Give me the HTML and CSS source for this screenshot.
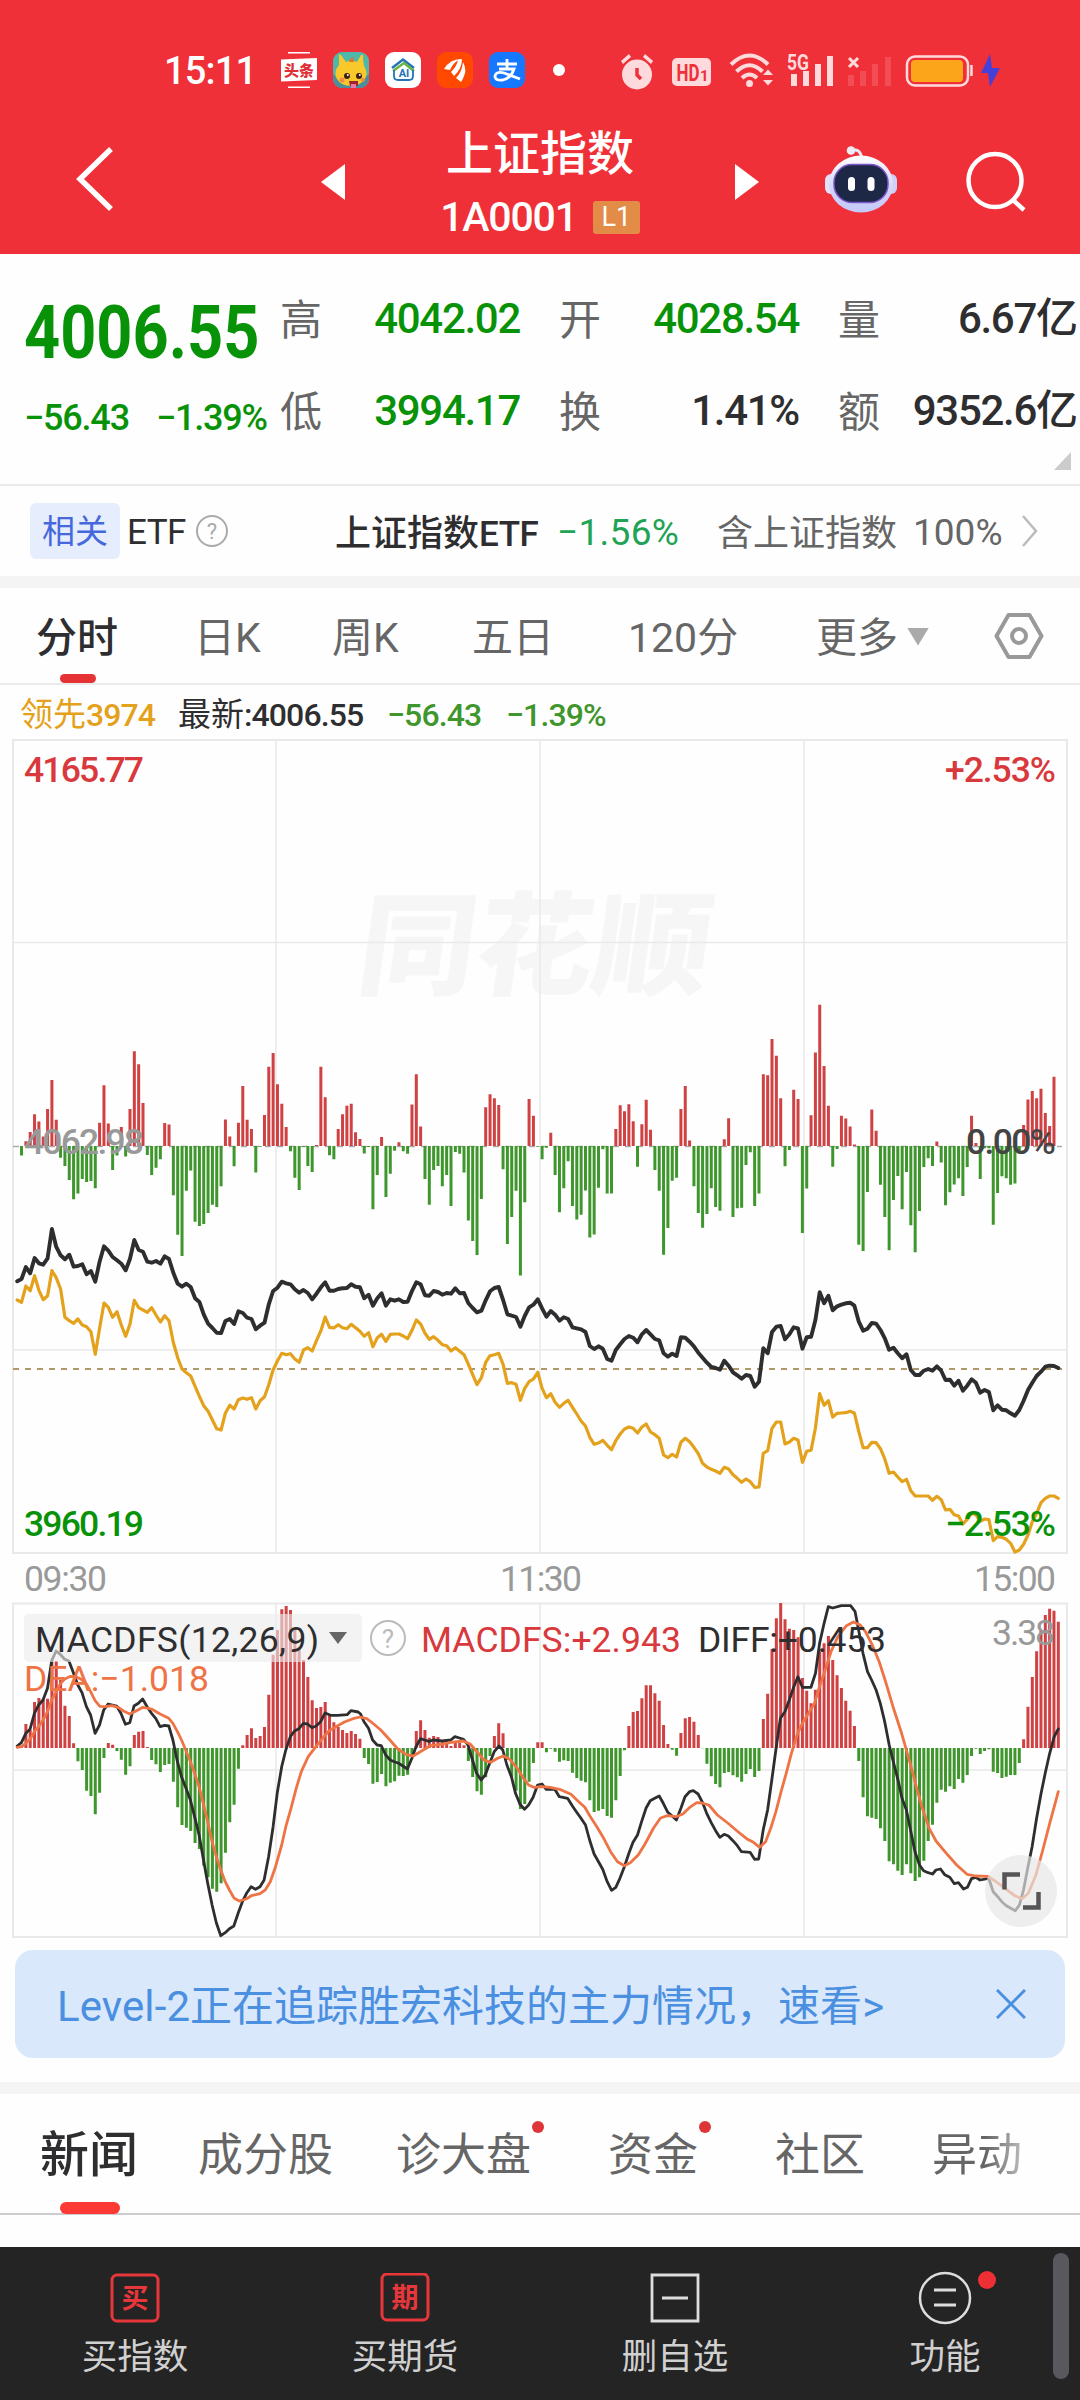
FILE: index.html
```html
<!DOCTYPE html>
<html lang="zh-CN">
<head>
<meta charset="utf-8">
<title>上证指数 1A0001</title>
<link rel="stylesheet" href="styles.css">
</head>
<body>
<header class="header">
  <div class="status">
    <span class="clock">15:11</span>
    <div class="apps">
      <svg class="app" viewBox="0 0 36 36"><path d="M7 .8h22M7 35.2h22" stroke="#fff" stroke-width="1.6"/><path d="M0 7.500 36 6v22L0 29.500z" fill="#fff"/><text x="18" y="23.500" text-anchor="middle" class="tt">头条</text></svg>
      <svg class="app" viewBox="0 0 36 36"><rect width="36" height="36" rx="9" fill="#4fb8a8"/><path d="M0 22Q18 40 36 22V27a9 9 0 0 1-9 9H9a9 9 0 0 1-9-9z" fill="#4a8f9c"/><path d="M6 4Q5 1 8 3L13 10 18 8 24 10 28 3Q31 2 30 7L31 14Q36 22 31 28 26 34 18 34 8 34 4 27 0 20 6 13z" fill="#f9c92c"/><path d="M17 7l3-2 1 5h-5z" fill="#e2752a"/><circle cx="14" cy="24" r="3" fill="#3b2015"/><circle cx="26" cy="24" r="3" fill="#3b2015"/><circle cx="14.800" cy="23" r="1" fill="#fff"/><circle cx="26.800" cy="23" r="1" fill="#fff"/><circle cx="9" cy="28" r="2.500" fill="#f08a4b"/><circle cx="30" cy="28" r="2" fill="#f08a4b"/><path d="M16 29h9v5h-8z" fill="#a02430"/><path d="M18 32h5v4h-5z" fill="#e77ba8"/></svg>
      <svg class="app" viewBox="0 0 36 36"><rect width="36" height="36" rx="9" fill="#fff"/><path d="M7 16 18 7.500 29 16" fill="none" stroke="#2474b8" stroke-width="2.500"/><path d="M8 19 19 11l10 8" fill="none" stroke="#6ab344" stroke-width="2.500"/><path d="M9 18v6q0 4 4 4h11q4 0 4-4v-6" fill="none" stroke="#2474b8" stroke-width="1.800"/><text x="19" y="24.500" text-anchor="middle" class="ai">AI</text></svg>
      <svg class="app" viewBox="0 0 36 36"><rect width="36" height="36" rx="9" fill="#ff4800"/><path d="M7 17Q13 7 24 7 16 10 13 18zM14 20Q20 14 21 8l4-1Q25 17 17 24zM19 26q6-6 7-16 4 8 1 14-2 5-3 6z" fill="#fff"/></svg>
      <svg class="app" viewBox="0 0 36 36"><rect width="36" height="36" rx="9" fill="#1677ff"/><path d="M8 12h20M18 7v10M10 17h15q-3 9-11 11-8 1-8-4 1-5 9-3 8 3 16 6" fill="none" stroke="#fff" stroke-width="2.800"/></svg>
    </div>
    <i class="more-dot"></i>
    <svg class="sys" viewBox="615 48 395 44">
      <g fill="#ffdadc">
        <circle cx="637" cy="74.500" r="15"/>
        <path d="M621 61l8-7 2 3-8 7zM653 61l-8-7-2 3 8 7z"/>
        <path d="M637 68v7l4 4" fill="none" stroke="#f03038" stroke-width="3.500"/>
        <rect x="672" y="58" width="39" height="28" rx="5"/>
        <circle cx="749.500" cy="83.500" r="3.500"/>
        <path d="M765 74l5-5.500 5 5.500zM765 79l5 5.500 5-5.500z" transform="translate(-2 1)"/>
        <path d="M791 74h6v12h-6zM803 71h6v15h-6zM815 64h6v22h-6zM827 56h6v30h-6z"/>
      </g>
      <g fill="none" stroke="#ffdadc" stroke-width="4">
        <path d="M731 64.500q18.500-18 37 0M736.500 71.500q13-12.500 26 0M742 78q7.500-7 15 0"/>
        <path d="M849 58l9 9M858 58l-9 9" stroke-width="3"/>
      </g>
      <path d="M848 75h6v11h-6zM860 71h6v15h-6zM872 64h6v22h-6zM885 57h6v29h-6z" fill="#fff" opacity=".14"/>
      <text class="hd" x="676.500" y="81" textLength="23" lengthAdjust="spacingAndGlyphs">HD</text><text class="hd1" x="700" y="81">1</text>
      <text class="g5" x="787" y="70" textLength="22" lengthAdjust="spacingAndGlyphs">5G</text>
      <rect x="907" y="56.500" width="61" height="29" rx="8" fill="none" stroke="#ffdadc" stroke-width="2.500"/>
      <rect x="911" y="60" width="52" height="22" rx="4" fill="#fca41a"/>
      <path d="M971.500 65v11" stroke="#ffdadc" stroke-width="2.500"/>
      <path d="M990 54 981 73h7l2 14 10-19h-8z" fill="#4540d8"/>
    </svg>
  </div>
  <div class="nav">
    <svg class="back" viewBox="0 0 40 66"><path d="M36 3 5 33 36 63" fill="none" stroke="#fff" stroke-width="5.500"/></svg>
    <svg class="tri" viewBox="0 0 24 36"><path d="M24 0v36L0 18z" fill="#fff"/></svg>
    <div class="title">
      <h1>上证指数</h1>
      <div class="code"><span>1A0001</span><b>L1</b></div>
    </div>
    <svg class="tri" viewBox="0 0 24 36"><path d="M0 0v36l24-18z" fill="#fff"/></svg>
    <svg class="robot" viewBox="825 145 72 68">
      <defs><linearGradient id="shell" x1="0" y1="0" x2="0" y2="1"><stop offset="0" stop-color="#fff"/><stop offset=".55" stop-color="#d5d5fa"/><stop offset="1" stop-color="#c3c9fb"/></linearGradient></defs>
      <path d="M851 151q9-4 11 8" fill="none" stroke="#e8e6f4" stroke-width="3"/>
      <circle cx="851" cy="150.500" r="4.300" fill="#eceaf5"/>
      <rect x="825" y="174" width="14" height="20" rx="6" fill="#e4e2fb"/><rect x="883" y="174" width="14" height="20" rx="6" fill="#d0cffa"/>
      <ellipse cx="861" cy="184" rx="32" ry="28.500" fill="url(#shell)"/>
      <rect x="834" y="164.500" width="54" height="38" rx="18" fill="#1d2846" stroke="#7a55c8" stroke-width="1.500"/>
      <rect x="848" y="177" width="7" height="14" rx="3.500" fill="#fff"/><rect x="867.500" y="177" width="7" height="14" rx="3.500" fill="#fff"/>
    </svg>
    <svg class="search" viewBox="0 0 62 62"><circle cx="29" cy="30.500" r="26.500" fill="none" stroke="#fff" stroke-width="4.500"/><path d="M47 50 58 60" stroke="#fff" stroke-width="4.500"/></svg>
  </div>
</header>

<section class="quote">
  <div class="now">
    <strong>4006.55</strong>
    <div class="chg"><span>−56.43</span><span>−1.39%</span></div>
  </div>
  <dl class="stats">
    <dt>高</dt><dd class="g">4042.02</dd><dt>开</dt><dd class="g">4028.54</dd><dt>量</dt><dd>6.67<em>亿</em></dd>
    <dt>低</dt><dd class="g">3994.17</dd><dt>换</dt><dd>1.41%</dd><dt>额</dt><dd>9352.6<em>亿</em></dd>
  </dl>
  <i class="corner"></i>
</section>

<section class="etf">
  <span class="tag">相关</span>
  <span class="etf-label">ETF</span>
  <svg class="help" viewBox="0 0 34 34"><circle cx="17" cy="17" r="15" fill="none" stroke="#aaa" stroke-width="2"/><text x="17" y="25" text-anchor="middle" class="q">?</text></svg>
  <span class="etf-name">上证指数<i>ETF</i></span>
  <span class="etf-chg">−1.56%</span>
  <span class="etf-in">含上证指数</span>
  <span class="etf-pct">100%</span>
  <svg class="go" viewBox="0 0 18 32"><path d="M2 1 15 16 2 31" fill="none" stroke="#bbb" stroke-width="2.500"/></svg>
</section>

<nav class="periods">
  <a class="on">分时</a><a>日K</a><a>周K</a><a>五日</a><a class="m120">120分</a><a>更多<i></i></a>
  <svg class="hex" viewBox="0 0 50 48"><path d="M14.500 3h21L47.500 24l-12 21h-21L2.500 24z" fill="none" stroke="#999" stroke-width="4" stroke-linejoin="round"/><circle cx="25" cy="24" r="7" fill="none" stroke="#999" stroke-width="4"/></svg>
</nav>

<div class="legend">
  <span class="lead">领先<i>3974</i></span><span>最新<i>:4006.55</i></span><span class="dn">−56.43</span><span class="dn">−1.39%</span>
</div>

<svg class="chart" viewBox="0 735 1080 1205">
  <g class="mark" transform="translate(354 986) skewX(-8)"><text textLength="352" lengthAdjust="spacingAndGlyphs">同花顺</text></g>
  <g class="grid">
    <rect x="13" y="740" width="1054" height="813"/>
    <path d="M13 942.500H1067M13 1350H1067M276 740V1553M540 740V1553M804 740V1553"/>
    <rect x="13" y="1603.500" width="1054" height="333.500"/>
    <path d="M13 1770H1067M276 1603V1937M540 1603V1937M804 1603V1937"/>
  </g>
  <path d="M13 1146.500H1062" stroke="#aaa" stroke-width="1.500" stroke-dasharray="6 6"/>
  <path d="M13 1369H1062" stroke="#b0986a" stroke-width="2" stroke-dasharray="6 6"/>
  <path id="flow-up" fill="#cf4142"/><path id="flow-down" fill="#3f962c"/>
  <polyline id="lead" class="line" stroke="#e3a11c" stroke-width="3.200"/>
  <polyline id="price" class="line" stroke="#2e2e30" stroke-width="3.900"/>
  <path id="macd-up" fill="#cf4142"/><path id="macd-down" fill="#3f962c"/>
  <polyline id="diff" class="line" stroke="#2e2e30" stroke-width="2.800"/>
  <polyline id="dea" class="line" stroke="#ee7446" stroke-width="2.800"/>
  <g class="num">
    <text x="24" y="782" textLength="120" fill="#d9393c">4165.77</text>
    <text x="945" y="782" textLength="111" fill="#d9393c">+2.53%</text>
    <text x="24" y="1154" textLength="120" fill="#999">4062.98</text>
    <text x="966" y="1154" textLength="90" fill="#444">0.00%</text>
    <text x="24" y="1536" textLength="120" fill="#089208">3960.19</text>
    <text x="945" y="1536" textLength="111" fill="#089208">−2.53%</text>
  </g>
  <g class="num mid" fill="#999">
    <text x="24" y="1591" textLength="83">09:30</text>
    <text x="500" y="1591" textLength="82">11:30</text>
    <text x="974" y="1591" textLength="82">15:00</text>
    <text x="992" y="1645" textLength="63">3.38</text>
  </g>
  <rect x="24" y="1614" width="338" height="48" rx="5" fill="#ececec" fill-opacity=".62"/>
  <g class="num mid">
    <text x="35" y="1651.500" textLength="284" fill="#2e2e30">MACDFS(12,26,9)</text>
    <path d="M329 1632h18l-9 12z" fill="#666"/>
    <circle cx="388" cy="1638" r="17" fill="none" stroke="#bbb" stroke-width="2"/>
    <text class="q2" x="388" y="1647.500" text-anchor="middle">?</text>
    <text x="421" y="1651.500" textLength="260" fill="#d9393c">MACDFS:+2.943</text>
    <text x="698" y="1651.500" textLength="188" fill="#2e2e30">DIFF:+0.453</text>
    <text x="24" y="1691" textLength="185" fill="#ee7446">DEA:−1.018</text>
  </g>
  <circle cx="1021" cy="1891" r="36" fill="#e6e6e6" fill-opacity=".68"/>
  <path d="M1004.500 1889.500V1874.500H1020M1038.500 1892V1907.500H1023" fill="none" stroke="#555" stroke-width="4.500"/>
</svg>

<aside class="notice">
  <span><i>Level-2</i>正在追踪胜宏科技的主力情况，速看<i>&gt;</i></span>
  <svg viewBox="0 0 30 30"><path d="M1 1 29 29M29 1 1 29" stroke="#4b8fe0" stroke-width="3"/></svg>
</aside>

<nav class="topics">
  <a class="on">新闻</a><a>成分股</a><a class="dot">诊大盘</a><a class="dot">资金</a><a>社区</a><a class="fade">异动</a>
</nav>

<footer class="bar">
  <a><svg viewBox="0 0 50 50"><rect x="2" y="2" width="46" height="46" rx="5" fill="none" stroke="#e8373b" stroke-width="3"/><text x="25" y="35" text-anchor="middle" class="ic">买</text></svg>买指数</a>
  <a><svg viewBox="0 0 50 50"><rect x="2" y="1" width="46" height="46" rx="5" fill="none" stroke="#e8373b" stroke-width="3"/><text x="25" y="34" text-anchor="middle" class="ic">期</text></svg>买期货</a>
  <a><svg viewBox="0 0 50 50"><path d="M2 2h46v46H2zM12 25h26" fill="none" stroke="#ddd" stroke-width="2.800"/></svg>删自选</a>
  <a class="fn"><svg viewBox="0 0 54 54"><circle cx="27" cy="27" r="25" fill="none" stroke="#ddd" stroke-width="2.500"/><path d="M16 19h22M16 34h22" stroke="#ddd" stroke-width="2.800"/></svg>功能</a>
  <i class="scroll"></i>
</footer>
<script src="chart.js"></script>
</body>
</html>
```
FILE: styles.css
```css
* { box-sizing: border-box; }
body {
  margin: 0;
  width: 1080px;
  height: 2400px;
  overflow: hidden;
  background: #fefefe;
  color: #2e2e30;
  font-family: Roboto, "Noto Sans CJK SC", sans-serif;
  display: flex;
  flex-direction: column;
}
i, em { font-style: normal; }
svg { display: block; flex: none; }

.header { height: 254px; background: #f03038; color: #fff; }
.status { height: 92px; padding: 48px 0 0 164px; display: flex; align-items: center; }
.clock { width: 117px; font-size: 38px; font-weight: 500; letter-spacing: -.8px; padding-top: 2px; }
.apps { display: flex; gap: 16px; }
.app { width: 36px; height: 36px; }
.tt { font: 900 15px "Noto Sans CJK SC", sans-serif; fill: #e02f38; }
.ai { font: 700 11px Roboto, sans-serif; fill: #2474b8; }
.more-dot { width: 12px; height: 12px; border-radius: 50%; background: #fff; margin: 0 50px 0 28px; }
.sys { width: 395px; height: 44px; }
.hd { font: 700 23px Roboto, sans-serif; fill: #f03038; }
.hd1 { font: 700 15px Roboto, sans-serif; fill: #f03038; }
.g5 { font: 700 22px Roboto, sans-serif; fill: #ffdadc; }

.nav {
  height: 162px;
  display: grid;
  grid-template-columns: 246px 24px 390px 90px 141px 62px;
  padding: 32px 0 0 75px;
  justify-content: start;
  align-items: start;
}
.back { width: 40px; height: 66px; margin-top: 22px; }
.tri { width: 24px; height: 36px; margin-top: 40px; }
.title { text-align: center; }
h1 { margin: -4px 0 0; font: 500 47px/60px "Noto Sans CJK SC", sans-serif; }
.code { display: flex; justify-content: center; align-items: center; gap: 16px; margin-top: 15px; height: 44px; }
.code span { font-size: 41px; font-weight: 500; letter-spacing: -1.2px; }
.code b { width: 47px; height: 33px; background: #e28c48; border-radius: 3px; font: 400 27px/33px Roboto, sans-serif; }
.robot { width: 72px; height: 68px; margin-top: 21px; }
.search { width: 62px; height: 62px; margin-top: 26px; }

.quote { position: relative; height: 232px; display: flex; border-bottom: 2px solid #eaeaea; }
.now { width: 280px; padding: 44px 0 0 24px; color: #089208; }
.now strong { display: block; font-size: 74px; line-height: 70px; font-weight: 700; transform: scaleX(.852); transform-origin: left; white-space: nowrap; }
.chg { display: flex; gap: 27px; margin-top: 29px; font-size: 36px; line-height: 42px; font-weight: 500; letter-spacing: -1.200px; white-space: nowrap; }
.stats { margin: 37px 0 0; display: flex; flex-wrap: wrap; width: 799px; align-content: flex-start; }
.stats dt { width: 42px; height: 92px; font: 400 42px/54px "Noto Sans CJK SC", sans-serif; color: #666; margin-top: -1px; height: 93px; }
.stats dd { margin: 0 39px 0 0; width: 198px; height: 92px; font-size: 42px; line-height: 56px; font-weight: 500; text-align: right; letter-spacing: -1.300px; white-space: nowrap; }
.stats dd:nth-of-type(3n) { margin-right: 0; width: 198px; }
.stats em { letter-spacing: 0; }
.stats .g { color: #089208; }
.corner { position: absolute; right: 9px; bottom: 14px; width: 17px; height: 18px; background: #ccc; clip-path: polygon(100% 0, 100% 100%, 0 100%); }

.etf { height: 90px; display: grid; grid-template-columns: 97px 68px 140px 222px 160px 196px 108px 20px; padding-left: 30px; align-items: center; font-size: 35px; white-space: nowrap; }
.tag { width: 90px; height: 56px; border-radius: 6px; background: #e6edfc; color: #4668dd; font-size: 33px; line-height: 58px; text-align: center; }
.etf-label { letter-spacing: -.5px; padding-top: 3px; }
.help { width: 34px; height: 34px; }
.q { font: 22px Roboto, sans-serif; fill: #aaa; }
.etf-name { font-size: 36px; font-weight: 500; margin-top: -2px; }
.etf-name i { font-size: 35px; letter-spacing: -.5px; }
.etf-chg { color: #20a355; font-size: 37px; letter-spacing: .3px; padding-top: 2px; }
.etf-in { color: #666; font-size: 36px; margin-top: -2px; }
.etf-pct { color: #666; font-size: 37px; padding-top: 2px; }
.go { width: 18px; height: 32px; }

.periods { position: relative; border-top: 12px solid #f4f4f4; border-bottom: 2px solid #eaeaea; height: 109px; display: grid; grid-template-columns: 158px 138px 140px 156px 188px 178px 50px; padding-left: 36px; align-items: center; font-size: 41px; color: #666; white-space: nowrap; }
.periods a { line-height: 56px; padding-top: 4px; }
.periods .on { color: #2e2e30; font-weight: 500; }
.periods .on::after { content: ""; position: absolute; left: 60px; bottom: 0; width: 36px; height: 9px; border-radius: 5px; background: #e53235; }
.periods a i { display: inline-block; margin: 0 0 6px 9px; width: 22px; height: 18px; background: #aaa; clip-path: polygon(0 0, 100% 0, 50% 100%); }
.hex { width: 50px; height: 48px; }

.legend { height: 50px; padding: 10px 0 0 20px; display: grid; grid-template-columns: 158px 209px 119px 120px; font-size: 33px; line-height: 40px; white-space: nowrap; }
.legend i, .legend .dn { font-size: 32px; letter-spacing: -.9px; font-weight: 500; }
.legend .lead { color: #e3a11c; }
.legend .dn { color: #3f962c; }

.chart { width: 1080px; height: 1205px; }
.mark text { font: 900 112px "Noto Sans CJK SC", sans-serif; fill: #f6f6f6; }
.grid { fill: none; stroke: #e9e9e9; stroke-width: 2; }
.grid path { stroke-width: 1.500; }
.line { fill: none; stroke-linejoin: round; stroke-linecap: round; }
.num text { font: 500 35.500px Roboto, sans-serif; }
.num.mid text { font-weight: 450; }
.num.mid .q2 { font-size: 26px; font-weight: 400; fill: #bbb; }

.notice { margin: 10px 15px 24px; height: 108px; border-radius: 18px; background: #dae8fb; color: #4b8fe0; padding: 0 39px 0 42px; display: flex; align-items: center; justify-content: space-between; font-size: 42px; white-space: nowrap; }
.notice span { margin-top: -4px; }
.notice i { letter-spacing: .1px; }
.notice svg { width: 30px; height: 30px; }

.topics { position: relative; height: 133px; border-top: 12px solid #f4f4f4; border-bottom: 2px solid #ccc; display: grid; grid-template-columns: 158px 198px 212px 167px 157px 100px; padding: 0 0 0 40px; align-items: center; font-size: 45px; color: #666; white-space: nowrap; }
.topics a { line-height: 60px; margin-top: 5px; }
.topics .on { font-size: 49px; font-weight: 500; color: #2e2e30; }
.topics .on::after { content: ""; position: absolute; left: 60px; bottom: -1px; width: 60px; height: 12px; border-radius: 6px; background: #fb3a36; }
.topics .dot { position: relative; justify-self: start; }
.topics .dot::after { content: ""; position: absolute; right: -13px; top: -5px; width: 12px; height: 12px; border-radius: 50%; background: #dd3538; }
.topics .fade { justify-self: start; color: transparent; background: linear-gradient(90deg, #666 60%, #bbb); -webkit-background-clip: text; background-clip: text; }

.bar { position: relative; margin-top: 32px; height: 153px; background: #242424; display: grid; grid-template-columns: repeat(4, 270px); }
.bar a { display: flex; flex-direction: column; align-items: center; padding-top: 26px; font-size: 35.500px; line-height: 44px; gap: 12px; color: #d0d0d0; }
.bar svg { width: 50px; height: 50px; }
.ic { font: 700 27px "Noto Sans CJK SC", sans-serif; fill: #e8373b; }
.bar .fn { position: relative; }
.bar .fn svg { width: 54px; height: 54px; margin: -2px 0; }
.bar .fn::after { content: ""; position: absolute; left: 168px; top: 24px; width: 18px; height: 18px; border-radius: 50%; background: #ee3034; }
.scroll { position: absolute; left: 1053px; top: 6px; width: 16px; height: 126px; border-radius: 8px; background: #58585e; }
```
FILE: chart.js
```js
// One sample per trading minute, 09:30 to 15:00.
const STEP = 4.338;
const X0 = 17.2;

const flowBase = 1124;
const flow = [
  1124,1150,1111,1086,1038,1058,1098,1024,946,1053,
  1156,1178,1216,1268,1252,1213,1221,1219,1238,1061,
  960,1063,1189,1150,1073,1152,1024,868,903,1008,
  1148,1202,1183,1160,1062,1066,1257,1364,1421,1245,
  1190,1329,1340,1335,1305,1283,1289,1233,1052,1098,
  1179,1061,962,1053,1078,1196,1126,1040,910,873,
  957,1010,1073,1138,1210,1243,1126,1178,1194,1121,
  910,992,1149,1160,1078,1038,1015,1010,1087,1105,
  1144,1127,1295,1202,1100,1262,1199,1137,1114,1138,
  1145,1012,930,1071,1213,1283,1189,1178,1233,1202,
  1286,1140,1145,1196,1325,1381,1419,1267,1019,984,
  995,1013,1187,1389,1316,1245,1474,1276,997,1042,
  1126,1160,1129,1088,1202,1303,1238,1165,1286,1323,
  1310,1244,1371,1363,1237,1133,1252,1252,1078,1014,
  1030,1011,1057,1180,1065,999,1080,1189,1245,1418,
  1346,1218,1210,1024,962,1109,1233,1305,1345,1308,
  1238,1289,1299,1106,1049,1316,1292,1291,1175,1141,
  1286,1252,930,933,835,880,995,1179,1135,972,
  997,1359,1239,1041,871,742,908,1015,1180,1132,
  1042,1050,1071,1120,1391,1408,1248,1025,1083,1229,
  1316,1406,1270,1205,1295,1194,1338,1411,1300,1181,
  1157,1178,1112,1169,1284,1249,1228,1211,1259,1181,
  1042,1116,1213,1130,1130,1337,1251,1206,1211,1229,
  1225,1140,1067,998,975,995,969,1035,1070,937
];

const price = [
  484,477,441,460,414,430,434,415,327,380,
  406,418,404,440,438,433,463,453,485,425,
  379,392,411,421,431,451,416,360,390,395,
  425,428,423,431,409,417,459,491,500,491,
  501,535,546,583,611,624,638,639,603,597,
  612,574,579,593,597,628,617,608,553,513,
  503,485,490,493,508,518,510,519,538,521,
  502,487,512,512,507,505,504,493,500,502,
  535,524,557,535,520,557,538,542,538,546,
  545,513,487,493,526,527,513,516,524,519,
  521,505,520,519,550,564,577,572,541,514,
  504,501,540,583,587,591,620,588,562,554,
  538,565,590,573,584,602,592,597,622,625,
  628,636,678,687,679,686,717,722,690,673,
  657,648,653,667,643,630,643,657,661,700,
  710,701,708,652,653,665,679,698,713,728,
  741,744,749,722,737,757,766,776,765,768,
  800,785,685,700,636,620,618,658,643,622,
  625,686,652,650,600,517,550,527,571,559,
  554,550,548,557,605,632,626,609,611,630,
  655,689,683,700,715,703,750,765,765,752,
  747,752,739,752,780,779,797,782,812,797,
  778,788,818,810,816,871,856,869,871,880,
  887,870,842,810,788,768,755,740,737,738,
  744
];

const lead = [
  540,547,498,512,467,511,539,527,452,473,
  507,592,602,610,597,615,620,635,703,625,
  549,562,592,575,615,649,612,541,563,570,
  577,563,585,606,587,602,668,713,747,758,
  768,799,829,857,874,900,926,930,879,856,
  867,839,834,838,833,867,842,830,794,750,
  722,700,704,701,717,727,690,683,693,662,
  632,591,622,624,614,623,626,613,623,634,
  649,638,680,653,643,664,643,642,642,648,
  656,631,600,612,640,658,650,661,674,677,
  693,683,694,704,733,764,794,773,727,707,
  704,700,733,790,788,793,841,805,785,777,
  757,805,833,821,847,862,850,841,862,882,
  903,918,952,973,969,961,976,989,962,942,
  927,921,925,939,921,912,936,944,955,1005,
  1013,1003,1011,967,955,965,982,1001,1030,1041,
  1048,1053,1060,1042,1047,1064,1075,1087,1077,1085,
  1102,1101,1000,992,925,906,906,972,966,955,
  960,1027,994,991,925,821,856,842,891,880,
  879,878,874,879,935,983,983,967,968,986,
  1017,1060,1056,1071,1085,1078,1112,1128,1128,1128,
  1128,1141,1129,1139,1170,1168,1184,1188,1212,1198,
  1180,1184,1204,1197,1199,1262,1250,1252,1258,1270,
  1296,1290,1273,1245,1205,1180,1148,1135,1128,1128,
  1135
];

const macdBase = 504;
const macd = [
  504,497,432,450,366,354,358,356,243,243,
  300,377,408,490,544,570,632,648,703,638,
  534,489,494,513,539,584,559,465,455,453,
  501,540,553,576,555,552,605,682,735,743,
  753,789,807,857,892,926,935,910,818,727,
  674,566,496,465,445,474,468,441,344,224,
  150,88,78,90,150,200,240,291,361,384,
  381,366,405,427,441,450,459,453,462,476,
  534,552,611,606,582,619,608,604,587,588,
  584,525,453,421,450,473,468,471,486,490,
  498,484,489,496,543,591,634,644,592,528,
  468,430,460,540,590,632,687,672,605,549,
  487,487,517,506,515,545,541,543,578,594,
  602,607,661,696,692,687,708,713,661,588,
  511,438,396,393,355,316,316,340,362,435,
  492,509,527,459,415,411,425,465,505,551,
  589,612,622,579,576,586,592,605,582,567,
  591,573,417,341,207,115,69,118,146,150,
  172,294,332,370,329,215,190,168,240,286,
  324,362,392,438,543,652,709,713,717,745,
  783,844,853,872,885,853,880,903,892,842,
  783,734,668,629,635,619,627,597,608,585,
  528,506,522,513,508,575,579,594,590,585,
  585,549,478,380,291,214,150,105,86,92,
  125
];

// Indicator curves as [x, y] pairs, in two halves split at 11:30.
const diffAM = [50,498,62,488,75,460,87,448,100,400,112,375,125,360,138,325,150,242,163,213,176,224,188,238,200,243,213,278,226,315,238,338,251,380,263,405,276,460,289,435,301,390,314,372,339,378,351,400,364,433,377,428,389,378,402,370,414,357,427,380,440,400,452,415,465,440,478,436,490,438,502,480,515,545,527,590,540,625,553,660,565,710,578,765,590,835,603,910,616,975,628,1028,641,1067,654,1058,666,1046,679,1038,692,998,704,965,717,938,729,920,742,928,755,920,767,900,780,830,793,740,805,640,818,560,830,510,843,470,855,453,868,446,881,430,893,432,906,443,918,438,931,425,944,399,960,406,980,406,1008,404,1019,392,1040,396,1047,402,1057,425,1070,445,1082,480,1095,495,1107,497,1120,525,1133,540,1145,545,1158,550,1170,558,1183,567,1196,535,1208,500,1221,476,1233,480,1246,484,1258,480,1284,483,1309,480,1321,470,1334,474,1346,478,1359,495,1372,540,1384,580,1397,600,1409,585,1422,550,1435,515,1449,498,1460,510,1472,555,1485,590,1497,640,1510,673,1523,688,1535,675,1548,652,1561,615];
const diffPM = [6,612,18,628,43,628,56,650,80,655,94,678,106,696,119,715,132,735,144,780,157,822,170,845,182,868,195,905,208,931,220,922,232,895,245,860,258,820,270,787,283,765,295,725,308,684,320,662,333,655,346,648,358,670,371,697,384,708,396,720,409,685,421,650,434,635,445,632,459,642,472,668,484,700,497,728,510,752,522,772,535,763,547,768,560,782,573,797,585,815,610,817,623,838,635,837,648,750,661,690,673,600,686,500,698,415,711,395,724,360,737,320,749,290,762,322,787,322,800,280,812,190,825,130,837,80,850,84,875,77,902,77,915,95,925,150,938,220,951,275,963,300,976,330,988,370,1001,425,1014,495,1026,545,1039,598,1051,655,1064,690,1077,755,1089,815,1102,855,1114,872,1127,878,1140,882,1150,870,1163,867,1175,884,1190,892,1203,911,1215,908,1230,927,1241,922,1253,896,1265,892,1278,900,1303,895,1316,935,1329,950,1341,965,1354,977,1367,985,1380,992,1392,975,1404,930,1417,860,1429,800,1442,715,1455,640,1467,580,1480,520,1493,470,1505,447];
const deaAM = [50,502,62,500,75,490,87,478,100,455,112,440,125,420,138,395,150,360,163,335,176,310,188,297,205,289,220,290,235,297,251,312,263,335,276,362,290,379,305,380,325,377,345,383,360,394,377,402,395,393,415,382,440,387,465,402,490,415,502,430,515,455,527,480,540,512,553,545,565,580,578,620,590,670,603,725,616,785,628,830,641,870,654,905,666,930,680,955,695,963,715,957,730,947,755,941,770,930,785,905,800,860,818,795,830,740,845,685,860,625,875,575,895,530,915,503,935,477,955,453,975,440,1000,426,1025,416,1045,411,1065,416,1085,432,1105,449,1130,478,1155,507,1180,524,1200,528,1225,512,1250,497,1280,493,1310,487,1345,483,1365,492,1385,515,1405,540,1425,547,1445,535,1462,528,1480,538,1500,562,1520,595,1535,615,1550,622];
const deaPM = [6,620,30,622,60,629,90,643,110,663,130,682,145,708,165,740,185,775,205,815,225,845,245,857,262,848,285,825,305,792,330,744,350,714,370,707,395,710,415,702,435,682,455,668,470,669,490,675,515,705,545,729,575,755,600,776,620,787,638,802,655,785,670,745,685,695,700,635,715,580,730,520,748,460,762,430,780,400,797,370,810,325,825,280,845,215,865,170,890,137,910,126,930,135,945,155,965,195,985,245,1005,310,1025,380,1050,460,1075,550,1090,610,1110,685,1130,745,1150,783,1180,820,1210,855,1240,883,1265,888,1300,889,1320,902,1350,925,1380,948,1400,956,1418,940,1440,885,1460,810,1480,730,1505,635];

const X_UNIT = 2.9037;

function bars(values, base, unit, zeroY, upId, downId) {
  let up = "", down = "";
  values.forEach((v, i) => {
    const h = (base - v) / unit;
    if (!h) return;
    const x = (X0 + i * STEP - 1.5).toFixed(2);
    const d = `M${x} ${zeroY}h3v${(-h).toFixed(1)}h-3z`;
    if (h > 0) up += d; else down += d;
  });
  document.getElementById(upId).setAttribute("d", up);
  document.getElementById(downId).setAttribute("d", down);
}

function series(id, values) {
  document.getElementById(id).setAttribute("points",
    values.map((v, i) => `${(X0 + i * STEP).toFixed(1)},${(1120 + v / 3).toFixed(1)}`).join(" "));
}

function curve(id, am, pm) {
  const pts = [];
  [[am, 0], [pm, 540]].forEach(([half, offset]) => {
    for (let i = 0; i < half.length; i += 2) {
      pts.push(`${(offset + half[i] / X_UNIT).toFixed(1)},${(1580 + half[i + 1] / 3).toFixed(1)}`);
    }
  });
  document.getElementById(id).setAttribute("points", pts.join(" "));
}

bars(flow, flowBase, 2.703, 1146, "flow-up", "flow-down");
bars(macd, macdBase, 3, 1748, "macd-up", "macd-down");
series("price", price);
series("lead", lead);
curve("diff", diffAM, diffPM);
curve("dea", deaAM, deaPM);
```
